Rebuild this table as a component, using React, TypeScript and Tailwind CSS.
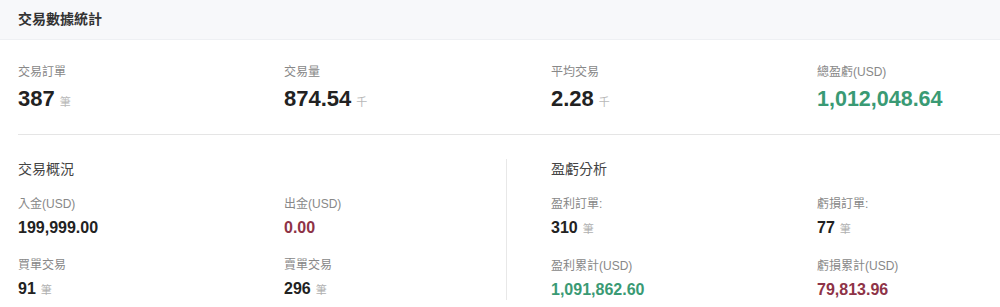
import React from 'react';

const font = { fontFamily: '"Liberation Sans", "Noto Sans CJK TC", sans-serif' };

type Stat = { label: string; value: string; unit?: string; color?: string };

const topStats: Stat[] = [
  { label: '交易訂單', value: '387', unit: '筆' },
  { label: '交易量', value: '874.54', unit: '千' },
  { label: '平均交易', value: '2.28', unit: '千' },
  { label: '總盈虧(USD)', value: '1,012,048.64', color: 'text-[#3a9a74] text-[21.5px]' },
];

const overview: Stat[] = [
  { label: '入金(USD)', value: '199,999.00' },
  { label: '出金(USD)', value: '0.00', color: 'text-[#8e3347]' },
  { label: '買單交易', value: '91', unit: '筆' },
  { label: '賣單交易', value: '296', unit: '筆' },
];

const profit: Stat[] = [
  { label: '盈利訂單:', value: '310', unit: '筆' },
  { label: '虧損訂單:', value: '77', unit: '筆' },
  { label: '盈利累計(USD)', value: '1,091,862.60', color: 'text-[#3a9a74]' },
  { label: '虧損累計(USD)', value: '79,813.96', color: 'text-[#8e3347]' },
];

function SmallStat({ s }: { s: Stat }) {
  return (
    <div>
      <div className="text-[12px] leading-[16px] text-[#888]">{s.label}</div>
      <div className="mt-[6px] flex items-baseline leading-[20px]">
        <span className={`text-[16px] font-bold ${s.color || 'text-[#222]'}`}>{s.value}</span>
        {s.unit && <span className="ml-[5px] text-[11px] text-[#b0b0b0]">{s.unit}</span>}
      </div>
    </div>
  );
}

export default function App() {
  return (
    <div className="w-[1000px] h-[307px] overflow-hidden bg-white" style={font}>
      <div className="w-[1102px]">
        {/* header */}
        <div className="h-[40px] flex items-center px-[18px] bg-[#f7f8fa] border-b border-[#eef0f3]">
          <h1 className="text-[14px] font-bold text-[#333]">交易數據統計</h1>
        </div>

        <div className="px-[18px]">
          {/* top stats */}
          <div className="grid grid-cols-[266px_267px_266px_267px] pt-[24px] pb-[19px] border-b border-[#e5e5e5]">
            {topStats.map((s, idx) => (
              <div key={idx}>
                <div className="text-[12px] leading-[16px] text-[#888]">{s.label}</div>
                <div className="mt-[6px] flex items-baseline leading-[26px]">
                  <span className={`font-bold ${s.color || 'text-[#222] text-[22px]'}`}>{s.value}</span>
                  {s.unit && <span className="ml-[5px] text-[11px] text-[#b8b8b8]">{s.unit}</span>}
                </div>
              </div>
            ))}
          </div>

          {/* bottom sections */}
          <div className="flex mt-[24px]">
            <div className="w-[489px] border-r border-[#e8e8e8]">
              <h2 className="text-[14px] leading-[20px] text-[#444]">交易概況</h2>
              <div className="grid grid-cols-[266px_1fr] gap-y-[19px] mt-[17px]">
                {overview.map((s, idx) => <SmallStat key={idx} s={s} />)}
              </div>
            </div>
            <div className="pl-[44px] flex-1">
              <h2 className="text-[14px] leading-[20px] text-[#444]">盈虧分析</h2>
              <div className="grid grid-cols-[266px_1fr] gap-y-[19px] mt-[17px]">
                {profit.map((s, idx) => <SmallStat key={idx} s={s} />)}
              </div>
            </div>
          </div>
        </div>
      </div>
    </div>
  );
}
